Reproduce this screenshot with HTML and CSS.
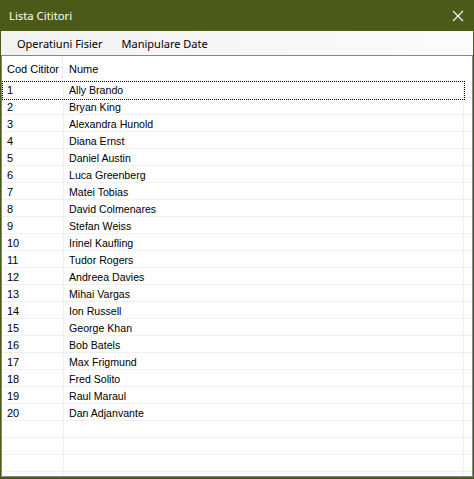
FILE: index.html
```html
<!DOCTYPE html>
<html>
<head>
<meta charset="utf-8">
<link rel="stylesheet" href="styles.css">
</head>
<body>
<div class="window">
  <div class="titlebar">
    <span class="title">Lista Cititori</span>
    <svg class="close" width="12" height="12" viewBox="0 0 12 12"><path d="M1 1 L11 11 M11 1 L1 11" stroke="#fff" stroke-width="1.1" fill="none"/></svg>
  </div>
  <div class="client">
    <div class="menubar">
      <span class="menuitem">Operatiuni Fisier</span>
      <span class="menuitem">Manipulare Date</span>
    </div>
    <div class="listview">
      <div class="header">
        <div class="hcell c1">Cod Cititor</div>
        <div class="hcell c2">Nume</div>
      </div>
      <div class="body">
        <div class="row focused"><div class="cell c1">1</div><div class="cell c2">Ally Brando</div></div>
        <div class="row"><div class="cell c1">2</div><div class="cell c2">Bryan King</div></div>
        <div class="row"><div class="cell c1">3</div><div class="cell c2">Alexandra Hunold</div></div>
        <div class="row"><div class="cell c1">4</div><div class="cell c2">Diana Ernst</div></div>
        <div class="row"><div class="cell c1">5</div><div class="cell c2">Daniel Austin</div></div>
        <div class="row"><div class="cell c1">6</div><div class="cell c2">Luca Greenberg</div></div>
        <div class="row"><div class="cell c1">7</div><div class="cell c2">Matei Tobias</div></div>
        <div class="row"><div class="cell c1">8</div><div class="cell c2">David Colmenares</div></div>
        <div class="row"><div class="cell c1">9</div><div class="cell c2">Stefan Weiss</div></div>
        <div class="row"><div class="cell c1">10</div><div class="cell c2">Irinel Kaufling</div></div>
        <div class="row"><div class="cell c1">11</div><div class="cell c2">Tudor Rogers</div></div>
        <div class="row"><div class="cell c1">12</div><div class="cell c2">Andreea Davies</div></div>
        <div class="row"><div class="cell c1">13</div><div class="cell c2">Mihai Vargas</div></div>
        <div class="row"><div class="cell c1">14</div><div class="cell c2">Ion Russell</div></div>
        <div class="row"><div class="cell c1">15</div><div class="cell c2">George Khan</div></div>
        <div class="row"><div class="cell c1">16</div><div class="cell c2">Bob Batels</div></div>
        <div class="row"><div class="cell c1">17</div><div class="cell c2">Max Frigmund</div></div>
        <div class="row"><div class="cell c1">18</div><div class="cell c2">Fred Solito</div></div>
        <div class="row"><div class="cell c1">19</div><div class="cell c2">Raul Maraul</div></div>
        <div class="row"><div class="cell c1">20</div><div class="cell c2">Dan Adjanvante</div></div>
        <div class="row"><div class="cell c1"></div><div class="cell c2"></div></div>
        <div class="row"><div class="cell c1"></div><div class="cell c2"></div></div>
        <div class="row"><div class="cell c1"></div><div class="cell c2"></div></div>
        <div class="row"><div class="cell c1"></div><div class="cell c2"></div></div>
        <div class="row"><div class="cell c1"></div><div class="cell c2"></div></div>
      </div>
    </div>
  </div>
</div>
</body>
</html>
```

FILE: styles.css
```css
* { box-sizing: border-box; }
html, body { margin: 0; padding: 0; }
body { width: 474px; height: 479px; overflow: hidden; }
.window {
  width: 474px;
  height: 479px;
  background: #4b5a19;
  display: flex;
  flex-direction: column;
}
.titlebar {
  flex: none;
  height: 31px;
  display: flex;
  align-items: center;
  justify-content: space-between;
  padding: 0 10px 0 9px;
  color: #fff;
  font-family: "Noto Sans", "DejaVu Sans", sans-serif;
  font-size: 11.3px;
}
.close { display: block; }
.client {
  flex: 1;
  min-height: 0;
  margin: 0 1px 2px 1px;
  display: flex;
  flex-direction: column;
  background: #fff;
}
.menubar {
  flex: none;
  height: 24px;
  display: flex;
  align-items: center;
  padding-left: 8px;
  background: linear-gradient(to right, #f2f2f2, #fbfbfb);
  font-family: "Noto Sans", "DejaVu Sans", sans-serif;
  font-size: 11px;
  color: #000;
}
.menuitem { padding: 0 8px; margin-right: 3px; }
.listview {
  flex: 1;
  min-height: 0;
  border: 1px solid #828790;
  display: flex;
  flex-direction: column;
  overflow: hidden;
  font-family: "Liberation Sans", Arial, sans-serif;
  font-size: 11px;
  color: #000;
}
.header {
  height: 25px;
  display: flex;
  flex: none;
}
.hcell {
  display: flex;
  align-items: center;
  padding-left: 5px;
  padding-top: 1px;
}
.hcell.c1 { width: 61px; border-right: 1px solid #e5e5e5; margin: 1px 0 2px; }
.hcell.c2 { width: 400px; padding-left: 6px; }
.body { flex: 1; min-height: 0; overflow: hidden; }
.row {
  position: relative;
  height: 17px;
  display: flex;
  border-bottom: 1px solid #f0f0f0;
  margin-right: 1px;
}
.cell {
  height: 17px;
  margin-bottom: -1px;
  display: flex;
  align-items: center;
  padding-left: 5px;
  border-right: 1px solid #f0f0f0;
  white-space: nowrap;
}
.cell.c1 { width: 62px; }
.cell.c2 { width: 400px; padding-left: 5px; font-size: 10.6px; }
.row.focused::after {
  content: "";
  position: absolute;
  left: 0;
  top: 0;
  width: 461px;
  height: 17px;
  border: 1px dotted #000;
}
```
